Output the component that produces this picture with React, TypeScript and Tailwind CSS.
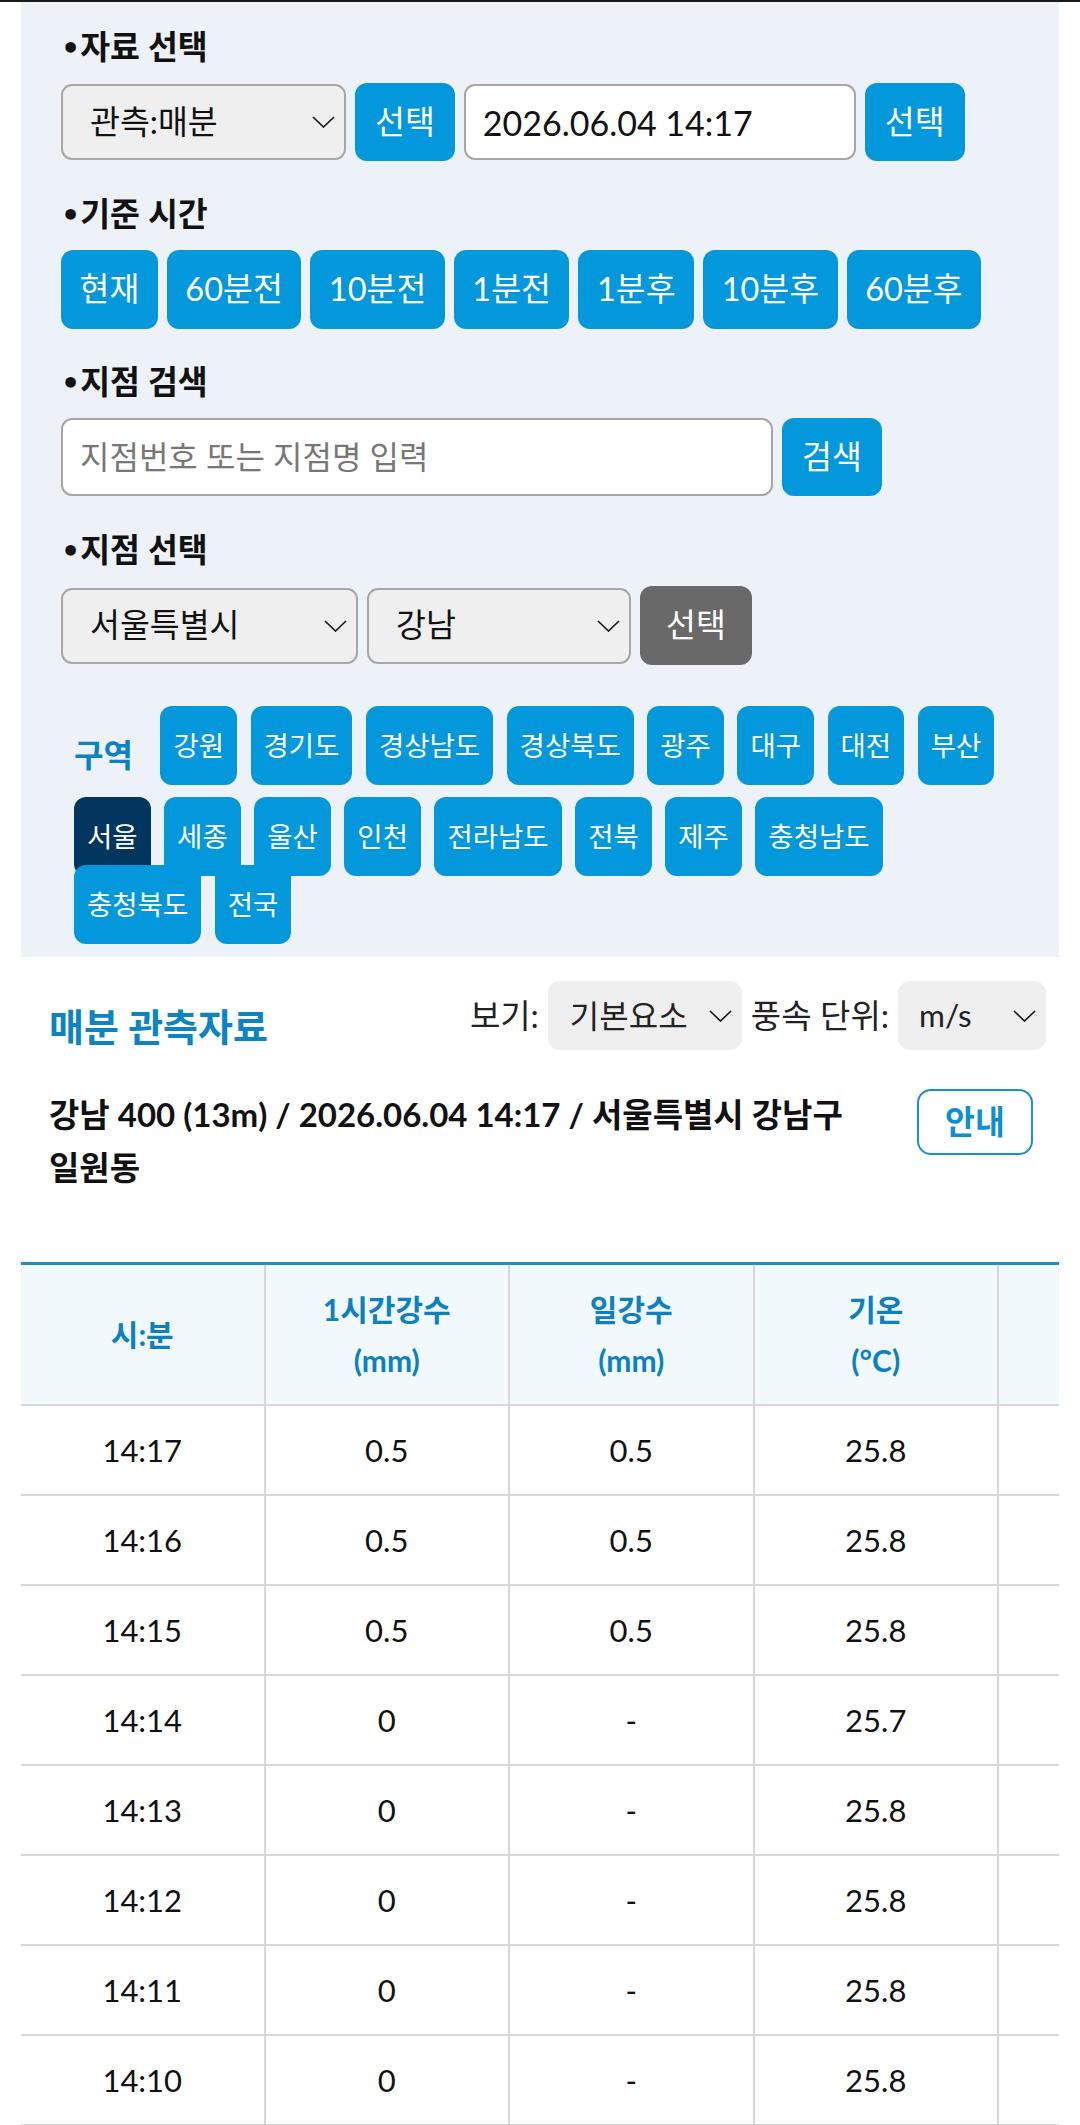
import React from "react";

const rows = [
  ["14:17", "0.5", "0.5", "25.8"],
  ["14:16", "0.5", "0.5", "25.8"],
  ["14:15", "0.5", "0.5", "25.8"],
  ["14:14", "0", "-", "25.7"],
  ["14:13", "0", "-", "25.8"],
  ["14:12", "0", "-", "25.8"],
  ["14:11", "0", "-", "25.8"],
  ["14:10", "0", "-", "25.8"],
];

const regionRow1 = ["강원", "경기도", "경상남도", "경상북도", "광주", "대구", "대전", "부산"];
const regionRow2 = ["서울", "세종", "울산", "인천", "전라남도", "전북", "제주", "충청남도"];
const regionRow3 = ["충청북도", "전국"];
const timeButtons = ["현재", "60분전", "10분전", "1분전", "1분후", "10분후", "60분후"];

function Chevron() {
  return (
    <svg width="23" height="12" viewBox="0 0 23 12" fill="none" stroke="#1a1a1a" strokeWidth="1.7">
      <polyline points="1,1 11.5,11 22,1" />
    </svg>
  );
}

function SelectBox({ label, className }: { label: string; className: string }) {
  return (
    <div className={`flex items-center justify-between bg-[#efefef] border-2 border-[#a6a6a6] rounded-[11px] pl-[27px] pr-[9px] ${className}`}>
      <span className="text-[32.5px] leading-none">{label}</span>
      <Chevron />
    </div>
  );
}

function BlueButton({ children }: { children: React.ReactNode }) {
  return (
    <button className="h-[78px] px-[20px] rounded-[12px] bg-[#0398dc] text-white text-[32.5px] leading-none">
      {children}
    </button>
  );
}

function Heading({ children, className = "" }: { children: React.ReactNode; className?: string }) {
  return (
    <h3 className={`h-[40px] text-[32.5px] leading-[40px] font-bold text-[#111] ${className}`}>
      <span className="font-['DejaVu_Sans'] text-[30px] leading-[0]">•</span>
      {children}
    </h3>
  );
}

function RegionButton({ name, active }: { name: string; active?: boolean }) {
  return (
    <button
      className={`relative h-[79px] px-[13px] rounded-[12px] text-white text-[27.5px] leading-none ${
        active ? "bg-[#02365f]" : "bg-[#0398dc]"
      }`}
    >
      {name}
    </button>
  );
}

export default function App() {
  return (
    <div className="min-h-screen bg-white border-t-2 border-[#17191d] font-[Lato,'Noto_Sans_CJK_KR',sans-serif] text-[#111]">
      {/* 검색 패널 */}
      <div className="mx-[21px] bg-[#ecf2f7] pl-[40px] pr-[20px] pt-[25px] pb-[13px]">
        <Heading>자료 선택</Heading>
        <div className="mt-[16px] flex items-center gap-[9px] h-[78px]">
          <SelectBox label="관측:매분" className="w-[285px] h-[76px]" />
          <BlueButton>선택</BlueButton>
          <div className="w-[392px] h-[76px] flex items-center bg-white border-2 border-[#a6a6a6] rounded-[11px] pl-[17px] text-[34px]">
            2026.06.04 14:17
          </div>
          <BlueButton>선택</BlueButton>
        </div>

        <Heading className="mt-[33px]">기준 시간</Heading>
        <div className="mt-[16px] flex gap-[9px]">
          {timeButtons.map((t) => (
            <button key={t} className="h-[79px] px-[18.5px] rounded-[12px] bg-[#0398dc] text-white text-[32.5px] leading-none">
              {t}
            </button>
          ))}
        </div>

        <Heading className="mt-[33px]">지점 검색</Heading>
        <div className="mt-[16px] flex items-center gap-[9px] h-[78px]">
          <div className="w-[712px] h-[78px] flex items-center bg-white border-2 border-[#a6a6a6] rounded-[11px] pl-[17px] text-[32px] text-[#777]">
            지점번호 또는 지점명 입력
          </div>
          <BlueButton>검색</BlueButton>
        </div>

        <Heading className="mt-[34px]">지점 선택</Heading>
        <div className="mt-[16px] flex items-center gap-[9px] h-[79px]">
          <SelectBox label="서울특별시" className="w-[297px] h-[76px]" />
          <SelectBox label="강남" className="w-[264px] h-[76px]" />
          <button className="h-[79px] px-[26px] rounded-[12px] bg-[#696969] text-white text-[32.5px] leading-none">선택</button>
        </div>

        {/* 구역 */}
        <div className="mt-[41px] ml-[13px]">
          <div className="flex items-start gap-[13.5px]">
            <span className="mt-[31px] mr-[14px] text-[32px] leading-[36px] font-bold text-[#0a82c4]">구역</span>
            {regionRow1.map((r) => (
              <RegionButton key={r} name={r} />
            ))}
          </div>
          <div className="mt-[12px] flex gap-[13.5px]">
            {regionRow2.map((r) => (
              <RegionButton key={r} name={r} active={r === "서울"} />
            ))}
          </div>
          <div className="relative -mt-[11px] flex gap-[13.5px]">
            {regionRow3.map((r) => (
              <RegionButton key={r} name={r} />
            ))}
          </div>
        </div>
      </div>

      {/* 매분 관측자료 */}
      <div className="mx-[21px] pl-[28px] pr-[13px] mt-[24px]">
        <div className="flex items-start justify-between">
          <h2 className="mt-[25px] text-[38px] leading-[40px] font-bold text-[#0b84c6]">매분 관측자료</h2>
          <div className="flex items-center gap-[9px] h-[69px] text-[33px] text-[#222]">
            <span>보기:</span>
            <div className="w-[194px] h-[69px] flex items-center justify-between bg-[#efefef] rounded-[12px] pl-[22px] pr-[10px]">
              <span className="leading-none text-[32px]">기본요소</span>
              <Chevron />
            </div>
            <span>풍속 단위:</span>
            <div className="w-[148px] h-[69px] flex items-center justify-between bg-[#efefef] rounded-[12px] pl-[21px] pr-[10px]">
              <span className="leading-none text-[31.5px]">m/s</span>
              <Chevron />
            </div>
          </div>
        </div>

        <div className="mt-[38px] flex items-start justify-between gap-[30px]">
          <p className="flex-1 break-keep text-[33px] leading-[53px] font-bold text-[#111]">
            강남 400 (13m) / 2026.06.04 14:17 / 서울특별시 강남구 일원동
          </p>
          <button className="mt-[1px] mr-[13px] w-[116px] h-[66px] border-2 border-[#1d8fd0] rounded-[14px] text-[32.5px] font-bold text-[#0b8fd6] leading-none">
            안내
          </button>
        </div>
      </div>

      {/* 표 */}
      <div className="mx-[21px] mt-[68px] overflow-hidden border-t-[3px] border-[#1c8dce]">
        <div className="w-[1222.5px]">
          <div className="grid grid-cols-[repeat(5,244.5px)] bg-[#f2f9fd] text-[30px] leading-[51px] font-bold text-[#0b80c2]">
            <div className="h-[141px] flex items-center justify-center border-r-2 border-b-2 border-[#d7d7d7]">시:분</div>
            <div className="h-[141px] flex flex-col items-center justify-center border-r-2 border-b-2 border-[#d7d7d7]">
              <span>1시간강수</span>
              <span>(mm)</span>
            </div>
            <div className="h-[141px] flex flex-col items-center justify-center border-r-2 border-b-2 border-[#d7d7d7]">
              <span>일강수</span>
              <span>(mm)</span>
            </div>
            <div className="h-[141px] flex flex-col items-center justify-center border-r-2 border-b-2 border-[#d7d7d7]">
              <span>기온</span>
              <span>(°C)</span>
            </div>
            <div className="h-[141px] border-r-2 border-b-2 border-[#d7d7d7]" />
          </div>
          {rows.map((r) => (
            <div key={r[0]} className="grid grid-cols-[repeat(5,244.5px)] text-[31px] text-[#111]">
              {r.map((v, i) => (
                <div key={i} className="h-[90px] flex items-center justify-center border-r-2 border-b-2 border-[#d7d7d7]">
                  {v}
                </div>
              ))}
              <div className="h-[90px] border-r-2 border-b-2 border-[#d7d7d7]" />
            </div>
          ))}
        </div>
      </div>
    </div>
  );
}
